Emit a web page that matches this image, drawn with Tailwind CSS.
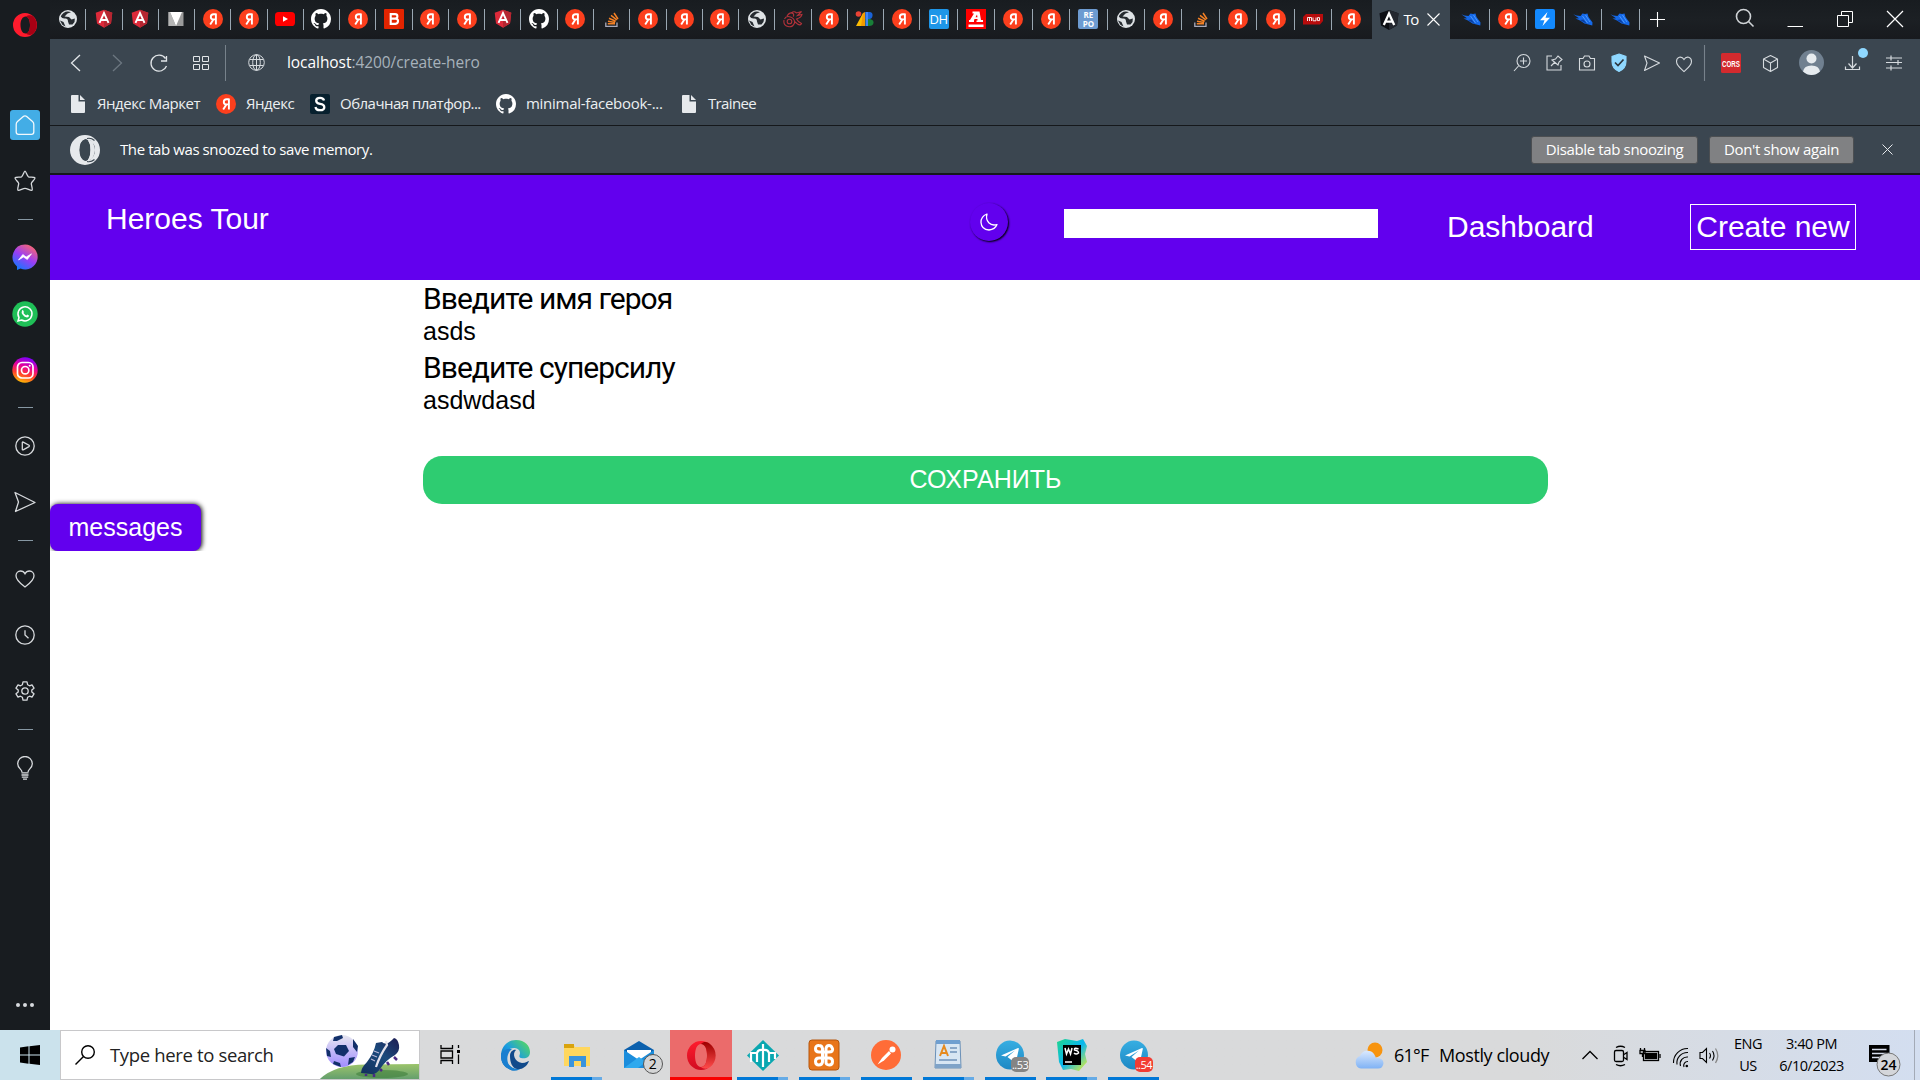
<!DOCTYPE html>
<html lang="en">
<head>
<meta charset="utf-8">
<title>Tour</title>
<script src="https://cdn.jsdelivr.net/npm/@tailwindcss/browser@4"></script>
</head>
<body class="w-[1920px] h-[1080px] overflow-hidden flex flex-col bg-white font-['Open_Sans','Noto_Sans',sans-serif]">
<svg class="absolute size-0">
  <defs>
    <linearGradient id="gMsg" x1="0.2" y1="1" x2="0.8" y2="0"><stop offset="0" stop-color="#0a7cff"/><stop offset=".5" stop-color="#9b3df5"/><stop offset="1" stop-color="#ff6a68"/></linearGradient>
    <linearGradient id="gInst" x1="0.3" y1="1" x2="0.6" y2="0"><stop offset="0" stop-color="#ffc400"/><stop offset=".35" stop-color="#ff3d2e"/><stop offset=".65" stop-color="#e6009e"/><stop offset="1" stop-color="#7a00ff"/></linearGradient>
    <linearGradient id="gOp" x1="0" y1="0" x2="0" y2="1"><stop offset="0" stop-color="#ff1b2d"/><stop offset="1" stop-color="#d00c20"/></linearGradient>
    <linearGradient id="gOp2" x1="0" y1="0" x2="0" y2="1"><stop offset="0" stop-color="#9c0000"/><stop offset="1" stop-color="#ff4b4b"/></linearGradient>
    <linearGradient id="gEdge" x1="0" y1="1" x2="1" y2="0"><stop offset="0" stop-color="#0c59a4"/><stop offset=".5" stop-color="#1b9de2"/><stop offset="1" stop-color="#5fe04d"/></linearGradient>
    <linearGradient id="gCloud" x1="0" y1="0" x2="0" y2="1"><stop offset="0" stop-color="#dbe9fd"/><stop offset="1" stop-color="#7fb2f5"/></linearGradient>
    <linearGradient id="gTg" x1="0" y1="0" x2="0" y2="1"><stop offset="0" stop-color="#37aee2"/><stop offset="1" stop-color="#1e88c4"/></linearGradient>
    <linearGradient id="gBoot" x1="0" y1="1" x2="1" y2="0"><stop offset="0" stop-color="#12305c"/><stop offset=".55" stop-color="#1b4a7c"/><stop offset="1" stop-color="#1d1b52"/></linearGradient>
    <linearGradient id="gGrass" x1="0" y1="0" x2="0" y2="1"><stop offset="0" stop-color="#9cc46b"/><stop offset="1" stop-color="#5d9a6e"/></linearGradient>
    <linearGradient id="gBall" x1="0" y1="0" x2="0" y2="1"><stop offset="0" stop-color="#e8e8f0"/><stop offset="1" stop-color="#a08cff"/></linearGradient>
    <linearGradient id="gWs" x1="0" y1="0" x2="1" y2="1"><stop offset="0" stop-color="#1fd68b"/><stop offset=".5" stop-color="#08b6f0"/><stop offset="1" stop-color="#f2f32b"/></linearGradient>
  </defs>
  <symbol id="ya" viewBox="0 0 20 20"><circle cx="10" cy="10" r="10" fill="#fc3f1d"/><path d="M12.900 4.600V15.600M12.900 5.300H10.600C8.900 5.300 7.800 6.300 7.800 7.900C7.800 9.400 8.800 10.400 10.500 10.400H12.900M10.400 10.400L7.200 15.500" fill="none" stroke="#fff" stroke-width="1.900"/></symbol>
  <symbol id="earth" viewBox="0 0 20 20"><circle cx="10" cy="10" r="9" fill="#dfe3e6"/><path d="M2.800 7.500Q4 9.800 7 9.500T10 12.500L11 15.500H14.500Q17.500 12.500 16.800 9.500L13.500 10.500L11 8L6.500 7.500L9.500 4.500L13 3.300Q9 1.500 5.500 4Q3 6 2.800 7.500Z" fill="#262b30"/><path d="M2 11.500L5.500 13L7.500 17.500L4.500 16Z" fill="#262b30"/><path d="M10.500 6L15.500 5.500L13.500 8Z" fill="#dfe3e6"/></symbol>
  <symbol id="ng" viewBox="0 0 20 20"><path d="M10 .8L18.300 3.700L17 14.600L10 18.800L3 14.600L1.700 3.700Z" fill="#dd2a3a"/><path d="M10 .8L18.300 3.700L17 14.600L10 18.800Z" fill="#b52631"/><path d="M5.500 13.800L10 4L14.500 13.800M7.400 11H12.600" fill="none" stroke="#fff" stroke-width="1.900"/></symbol>
  <symbol id="ngk" viewBox="0 0 20 20"><path d="M10 0L19.500 3.300L18 15.500L10 20L2 15.500L.5 3.300Z" fill="#0d0f14"/><path d="M10 0L19.500 3.300L18 15.500L10 20Z" fill="#23272f"/><path d="M4.800 15L10 3.500L15.200 15M7 11.700H13" fill="none" stroke="#fff" stroke-width="2.300"/></symbol>
  <symbol id="vv" viewBox="0 0 20 20"><path d="M2.500 3H17.500V17H2.500Z" fill="#9b9b9b"/><path d="M4 3H16L10 17Z" fill="#fff"/><path d="M2.500 3H4L10 17H2.500Z" fill="#b5b5b5"/></symbol>
  <symbol id="yt" viewBox="0 0 20 20"><rect y="3" width="20" height="14" rx="3.600" fill="#f00"/><path d="M8 7.200V12.800L13 10Z" fill="#fff"/></symbol>
  <symbol id="gh" viewBox="0 0 16 16"><path fill="#fff" d="M8 0C3.580 0 0 3.580 0 8c0 3.540 2.290 6.530 5.470 7.590.4.070.55-.17.55-.38 0-.19-.01-.82-.01-1.490-2.010.37-2.530-.49-2.690-.94-.09-.23-.48-.94-.82-1.130-.28-.15-.68-.52-.01-.53.63-.01 1.080.58 1.230.82.72 1.210 1.870.87 2.330.66.07-.52.28-.87.51-1.070-1.780-.2-3.640-.89-3.640-3.950 0-.87.31-1.590.82-2.150-.08-.2-.36-1.020.08-2.120 0 0 .67-.21 2.200.82.64-.18 1.320-.27 2-.27s1.360.09 2 .27c1.530-1.040 2.200-.82 2.200-.82.44 1.100.16 1.920.08 2.120.51.56.82 1.270.82 2.150 0 3.070-1.870 3.750-3.650 3.950.29.25.54.73.54 1.480 0 1.070-.01 1.930-.01 2.200 0 .21.15.46.55.38A8.010 8.010 0 0 0 16 8c0-4.420-3.580-8-8-8z"/></symbol>
  <symbol id="bb" viewBox="0 0 20 20"><rect width="20" height="20" rx="1" fill="#e32400"/><path d="M6.700 5.100H11Q13.400 5.100 13.400 7.300T11 9.600H6.700ZM6.700 9.600H11.500Q14 9.600 14 12.100T11.400 14.900H6.700Z" fill="none" stroke="#fff" stroke-width="2.100"/></symbol>
  <symbol id="so" viewBox="0 0 20 20"><path d="M3.800 13.500V17.300H15V13.500" fill="none" stroke="#aab" stroke-width="1.300"/><path d="M5.800 14.800H13M6 12.200L13.100 13.600M7 9.300L13.700 12.200M9 6.300L14.800 10.800M12 4L16 10" stroke="#f48024" stroke-width="1.500"/></symbol>
  <symbol id="ok" viewBox="0 0 20 20"><g fill="none" stroke="#b3323a" stroke-width="1.100"><circle cx="6.500" cy="12.500" r="2.300"/><path d="M1.500 10Q3 6.500 7.500 8Q12 9.500 11.500 14Q10 18 6 17.800Q0 17 1 11M4 7Q7 2.500 10 4.500Q11.500 6 10 7.500M8.500 4Q11 1.500 13.500 4L18.500 2.500L14.500 6.500L19 5.500Q18.500 8.500 13.500 10Q15 13 18.500 14.500Q17.500 17 14.500 15L11.500 12.500"/></g></symbol>
  <symbol id="cb" viewBox="0 0 20 20"><circle cx="3.500" cy="5" r="2.800" fill="#ea4335"/><path d="M1 17L8 4V17Z" fill="#fbbc04"/><path d="M8 4L6 17H10V3Z" fill="#f29900"/><path d="M10.500 3H15Q18 3.500 17.500 7T13.500 10H10.500Z" fill="#1a63d8"/><path d="M10.500 10H15Q19 11 18.500 14T14 17H10.500Z" fill="#188038"/><path d="M10.500 3H13V17H10.500Z" fill="#4285f4"/></symbol>
  <symbol id="bird" viewBox="0 0 20 20"><path d="M.3 5.200L3.500 6.500L7.500 7L9.500 4.500L12 5L14.500 4.500L15.500 8L19.500 13.500L19.300 16.500L15.500 15.500L11.500 14.500L7 11.500L2.500 9.500L6 9.200Z" fill="#1468e8"/><path d="M9.500 7L14.500 14M12.500 6L17 13" stroke="#5aa4ff" stroke-width=".8"/><path d="M7 11L10.500 10.500L14 15Z" fill="#0a3fa0"/></symbol>
  <symbol id="bolt" viewBox="0 0 20 20"><rect width="20" height="20" rx="2" fill="#1389fd"/><path d="M12.500 3L5 11.200H9.500L7.500 17L15 8.800H10.500Z" fill="#fff"/></symbol>
  <symbol id="amp" viewBox="0 0 20 20"><rect width="20" height="20" fill="#f00"/><path d="M3 13V11H4L8 4.500H6.500V2.500H13.500L15 11H17V13H10.500V11.500H11.500V10H8.500L8 11.500V13ZM9.500 8.300H11.500L11 5.500Z" fill="#fff"/><path d="M2.500 15.500H17.500V18H2.500Z" fill="#fff"/></symbol>
  <symbol id="mud" viewBox="0 0 20 20"><path d="M3 5H20V12L17 15.500H0V8Z" fill="#b80c0c"/><path d="M4.500 12V8.500H8.500V12M6.500 8.500V12M10 8.500V11.800H13V8.500M14.500 8.600H16.500V11.600H14.500Z" fill="none" stroke="#fff" stroke-width=".9"/></symbol>
  <symbol id="doc" viewBox="0 0 14 18"><path d="M0 1Q0 0 1 0H7.500V6.500H14V17Q14 18 13 18H1Q0 18 0 17Z" fill="#e6e9ec"/><path d="M9 0L14 5H9Z" fill="#e6e9ec"/></symbol>
  <symbol id="send" viewBox="0 0 22 22"><path d="M1 1.500L21 11.500L1.500 20.500L4.500 11Z" fill="none" stroke="currentColor" stroke-width="1.300" stroke-linejoin="round"/></symbol>
  <symbol id="heart" viewBox="0 0 20 20"><path d="M10 18C6 15 1 11.500 1 6.800C1 4 3 2 5.500 2C7.500 2 9.200 3.200 10 4.800C10.800 3.200 12.500 2 14.500 2C17 2 19 4 19 6.800C19 11.500 14 15 10 18Z" fill="none" stroke="currentColor" stroke-width="1.300"/></symbol>
  <symbol id="tg" viewBox="0 0 30 38"><ellipse cx="15" cy="19" rx="14" ry="14.500" fill="url(#gTg)"/><path d="M6 19.500L23 12Q24 11.800 23.800 13L21 26Q20.500 27 19.500 26.500L12.500 21L20 14.500L10.500 20.500Z" fill="#fff"/></symbol>
</svg>

<div class="flex h-[1030px]">
  <!-- Sidebar -->
  <aside class="w-[50px] h-[1030px] shrink-0 bg-[#181c20] flex flex-col items-center text-[#d7dadd]">
    <div class="h-[97px] pt-[13px]">
      <svg class="size-6" viewBox="0 0 24 24"><path fill-rule="evenodd" d="M12 0A12 12 0 1 0 12 24A12 12 0 1 0 12 0ZM12.500 3.500C15.300 3.500 17 7 17 12S15.300 20.500 12.500 20.500S7.500 17 7.500 12S9.700 3.500 12.500 3.500Z" fill="#ff1b2d"/><path d="M12.500 3.500C16 1.500 18.500 2.200 20 3.200A12 12 0 0 1 20 20.800C17.500 22.500 15 22.300 12.500 20.500C15.300 20.500 17 17 17 12S15.300 3.500 12.500 3.500Z" fill="#a70014"/></svg>
    </div>
    <div class="h-14 flex items-center"><div class="size-[30px] rounded-[3px] bg-[#43ade6] flex items-center justify-center"><svg class="size-5" viewBox="0 0 20 20"><path d="M10 .9Q11 .9 12 1.800L17.500 6.600Q18.800 7.800 18.800 9.500V17Q18.800 19.300 16.500 19.300H3.500Q1.200 19.300 1.200 17V9.500Q1.200 7.800 2.500 6.600L8 1.800Q9 .9 10 .9Z" fill="none" stroke="#f2f8fc" stroke-width="1.300"/></svg></div></div>
    <div class="h-14 flex items-center"><svg class="size-[22px] mr-px" viewBox="0 0 22 22"><path d="M11 1.200C12 1.200 13 6.200 14.500 6.900C16 7.500 20.500 6.500 21 8C21.300 9.200 17.500 12 17.300 13.500C17.200 15 19 19.500 18 20.300C16.800 21 13 18.300 11 18.300S5.200 21 4 20.300C3 19.500 4.800 15 4.700 13.500C4.500 12 .7 9.200 1 8C1.500 6.500 6 7.500 7.500 6.900C9 6.200 10 1.200 11 1.200Z" fill="none" stroke="currentColor" stroke-width="1.300"/></svg></div>
    <div class="h-5 flex items-center"><div class="w-[15px] h-px bg-[#8697a3]"></div></div>
    <div class="h-14 flex items-center"><svg class="size-[26px]" viewBox="0 0 26 26"><path d="M13 0.500A12.500 12.500 0 1 1 8.500 24.600L5 26V22.500A12.500 12.500 0 0 1 13 .5Z" fill="url(#gMsg)"/><path d="M6.500 16L10.800 10.500L14.200 13L19.500 9.800L15.300 15.500L11.500 13Z" fill="#fff" stroke="#fff" stroke-width=".7" stroke-linejoin="round"/></svg></div>
    <div class="h-[57px] flex items-center"><svg class="size-[26px]" viewBox="0 0 26 26"><circle cx="13" cy="13" r="12.700" fill="#1fbf57"/><path d="M6 20L7 16.500A7 7 0 1 1 9.600 19Z" fill="none" stroke="#fff" stroke-width="1.500"/><path d="M10 9.500Q10.800 8.700 11.300 9.600L11.900 11Q11.300 11.800 11.800 12.500Q12.800 13.800 14.200 14.400L15.200 13.600L17 14.500Q17 16.300 15 16.500Q12.500 16.300 10.700 13.800Q9 11.500 10 9.500Z" fill="#fff"/></svg></div>
    <div class="h-14 flex items-center"><svg class="size-[26px]" viewBox="0 0 26 26"><circle cx="13" cy="13" r="12.700" fill="url(#gInst)"/><g fill="none" stroke="#fff" stroke-width="1.700"><rect x="5.500" y="5.500" width="15.500" height="15.500" rx="4.500"/><circle cx="13.200" cy="13.200" r="3.700"/></g><circle cx="17.700" cy="8.800" r="1" fill="#fff"/></svg></div>
    <div class="h-[19px] flex items-center"><div class="w-[15px] h-px bg-[#8697a3]"></div></div>
    <div class="h-[57px] flex items-center"><svg class="size-5 mr-px" viewBox="0 0 20 20"><g fill="none" stroke="currentColor" stroke-width="1.300"><circle cx="10" cy="10" r="9.200"/><path d="M7.300 6.600Q7.300 5.700 8.200 6.100L14 9.300Q14.800 10 14 10.600L8.200 13.800Q7.300 14.200 7.300 13.300Z"/></g></svg></div>
    <div class="h-14 flex items-center"><svg class="size-[22px]"><use href="#send"/></svg></div>
    <div class="h-[21px] flex items-center"><div class="w-[15px] h-px bg-[#8697a3]"></div></div>
    <div class="h-14 flex items-center"><svg class="size-5 mr-px"><use href="#heart"/></svg></div>
    <div class="h-14 flex items-center"><svg class="size-5 mr-px" viewBox="0 0 20 20"><g fill="none" stroke="currentColor" stroke-width="1.300"><circle cx="10" cy="10" r="9.200"/><path d="M10 5.300V10L13.500 13.300"/></g></svg></div>
    <div class="h-14 flex items-center"><svg class="size-5 mr-px" viewBox="0 0 20 20"><g fill="none" stroke="currentColor" stroke-width="1.300" stroke-linejoin="round"><circle cx="10" cy="10" r="3.200"/><path d="M8 .8H12L12.600 3.700L14.600 4.800L17 3.800L19 7.200L16.800 9V11L19 12.800L17 16.200L14.600 15.200L12.600 16.300L12 19.200H8L7.400 16.300L5.400 15.200L3 16.200L1 12.800L3.200 11V9L1 7.200L3 3.800L5.400 4.800L7.400 3.700Z"/></g></svg></div>
    <div class="h-[21px] flex items-center"><div class="w-[15px] h-px bg-[#8697a3]"></div></div>
    <div class="h-14 flex items-center"><svg class="w-4 h-6" viewBox="0 0 16 24"><g fill="none" stroke="currentColor" stroke-width="1.300"><path d="M5 16.200C5 13 .7 12.500 .7 7.800A7.300 7.300 0 0 1 15.300 7.800C15.300 12.500 11 13 11 16.200"/><path d="M4.500 16.800H11.500M4.500 19H11.500M4.800 21.200H11.200M6 23.200H10"/></g></svg></div>
    <div class="mt-auto h-[50px] flex items-center gap-[3px]"><i class="size-1 rounded-full bg-[#d7dadd]"></i><i class="size-1 rounded-full bg-[#d7dadd]"></i><i class="size-1 rounded-full bg-[#d7dadd]"></i></div>
  </aside>

  <main class="w-[1870px] flex flex-col">
    <!-- Tab strip -->
    <div class="h-[39px] shrink-0 flex bg-linear-to-b from-[#181c20] via-[#1c2024] to-[#181a1e]">
      <div id="tabsA" class="flex"></div>
      <div id="tabsB" class="flex w-[452px]"></div>
      <div class="w-[78px] bg-[#3b4650] flex items-center pl-[7px] text-white text-[15px]">
        <svg class="size-5 shrink-0"><use href="#ngk"/></svg>
        <span class="w-[16px] ml-[4px] overflow-hidden whitespace-nowrap tracking-[-1.5px]">To</span>
        <svg class="size-[13px] ml-2" viewBox="0 0 13 13"><path d="M.5 .5L12.500 12.500M12.500 .5L.5 12.500" stroke="#fff" stroke-width="1.100"/></svg>
      </div>
      <div id="tabsC" class="flex pl-[2px]"></div>
      <div class="flex items-center ml-2.5"><svg class="size-[15px]" viewBox="0 0 15 15"><path d="M7.500 0V15M0 7.500H15" stroke="#fff" stroke-width="1.100"/></svg></div>
      <div class="ml-auto flex items-center text-white">
        <svg class="w-[50px] h-[39px]" viewBox="0 0 50 39"><g fill="none" stroke="#cfd3d6" stroke-width="1.600"><circle cx="23.500" cy="16.500" r="7"/><path d="M28.500 21.500L33.500 26.500"/></g></svg>
        <svg class="w-[50px] h-[39px]" viewBox="0 0 50 39"><path d="M17.500 26.500H33" stroke="#fff"/></svg>
        <svg class="w-[50px] h-[39px]" viewBox="0 0 50 39"><g fill="none" stroke="#fff"><path d="M17.500 15.500H28.500V26.500H17.500ZM21.500 15.500V11.500H32.500V22.500H28.500"/></g></svg>
        <svg class="w-[50px] h-[39px]" viewBox="0 0 50 39"><path d="M17 11L33 27M33 11L17 27" stroke="#fff" stroke-width="1.200"/></svg>
      </div>
    </div>

    <!-- Address bar -->
    <div class="h-12 shrink-0 bg-[#3b4650] flex items-center text-[#e2e6e9]">
      <svg class="w-[175px] h-12" viewBox="0 0 175 48" fill="none" stroke="#e2e6e9" stroke-width="1.300"><path d="M30 16L21.500 24L30 32"/><path d="M63 16L71.500 24L63 32" stroke="#6c7780"/><path d="M115.500 19.500A8 8 0 1 0 116.500 27M116.500 17V22H111"/><path d="M143.500 17.500H149.500V22.500H143.500ZM152.500 17.500H158.500V22.500H152.500ZM143.500 25.500H149.500V30.500H143.500ZM152.500 25.500H158.500V30.500H152.500Z" stroke-width="1"/></svg>
      <div class="w-px h-9 bg-[#77828b]"></div>
      <svg class="size-[17px] ml-[22px] mb-0.5" viewBox="0 0 17 17"><g fill="none" stroke="#d5dade" stroke-width="1"><circle cx="8.500" cy="8.500" r="7.800"/><ellipse cx="8.500" cy="8.500" rx="3.800" ry="7.800"/><path d="M8.500 .7V16.300M1.500 5.500H15.500M1.500 11.500H15.500"/></g></svg>
      <div class="ml-[22px] text-[15.500px] whitespace-nowrap text-[#a7b2bb] tracking-[-0.06px]"><span class="text-white">localhost</span>:4200/create-hero</div>
      <div class="ml-auto flex items-center">
        <svg class="w-[335px] h-12 text-[#d5dade]" viewBox="1505 39 335 48" fill="none" stroke="#d5dade" stroke-width="1.100">
          <circle cx="1523.500" cy="61" r="6.500"/><path d="M1518.500 66L1514 71M1520 61H1527M1523.500 57.500V64.500"/>
          <path d="M1552 56H1547V70H1561V65M1551 66L1555 62M1552 60L1558 65L1559 62L1562 59.500L1558 56L1555.500 59Z"/>
          <path d="M1579.500 58.500H1583L1584.500 56H1589L1590.500 58.500H1594.500V70H1579.500Z"/><circle cx="1587" cy="64" r="3"/>
          <path d="M1619 55.500L1626 58V63Q1626 70 1619 73Q1612 70 1612 63V58Z" fill="#8fd8ff" stroke="#8fd8ff" transform="translate(0 -1.500)"/><path d="M1615 62.500L1618 65.500L1623.500 59.500" stroke="#2d3740" stroke-width="1.700"/>
          <path d="M1644.500 57L1659.500 64L1644.500 71.500L1647 64Z" stroke-linejoin="round" transform="translate(0 -1)"/>
          <path d="M1684 71.500C1680 68 1676.500 65.500 1676.500 61.500C1676.500 57 1681.500 55.500 1684 59.500C1686.500 55.500 1691.500 57 1691.500 61.500C1691.500 65.500 1688 68 1684 71.500Z"/>
          <path d="M1704.500 45V81" stroke="#77828b"/>
          <rect x="1721" y="53" width="20" height="20" rx="1.500" fill="#d32a2e" stroke="none"/>
          <text x="1731" y="66.500" text-anchor="middle" textLength="18" lengthAdjust="spacingAndGlyphs" font-family="Liberation Sans" font-size="9.500" font-weight="700" fill="#fff" stroke="none">CORS</text>
          <path d="M1770.500 55.500L1777.500 59V67.500L1770.500 71.500L1763.500 67.500V59ZM1763.500 59L1770.500 63L1777.500 59M1770.500 63V71.500" stroke-linejoin="round"/>
          <circle cx="1811.500" cy="62.500" r="12.500" fill="#708090" stroke="none"/><circle cx="1811.500" cy="58.500" r="5" fill="#e6ebef" stroke="none"/><path d="M1803 71.500Q1804 65.500 1811.500 65.500T1820 71.500Q1816 75 1811.500 75T1803 71.500Z" fill="#e6ebef" stroke="none"/>
        </svg>
        <svg class="w-[80px] h-12" viewBox="1840 39 80 48" fill="none" stroke="#d5dade" stroke-width="1.200">
          <path d="M1852.500 56V68M1848.500 63.500L1852.500 68L1856.500 63.500M1845.500 66.500V69.500H1859.500V66.500"/><circle cx="1863" cy="53" r="5" fill="#8fd8ff" stroke="none"/>
          <path d="M1886 58H1902M1886 62.500H1902M1886 68H1902M1891 55.500V60.500M1898 60V65M1891 65.500V70.500"/>
        </svg>
      </div>
    </div>

    <!-- Bookmarks -->
    <div class="h-[39px] shrink-0 bg-[#3b4650] border-b border-[#15181b] pb-1 flex items-center text-[#eceff1] text-[15px] whitespace-nowrap">
      <svg class="w-3.5 h-[18px] ml-[21px]"><use href="#doc"/></svg><span class="w-[107px] ml-3 mb-0.5 tracking-[-0.46px]">Яндекс Маркет</span>
      <svg class="size-5 ml-3"><use href="#ya"/></svg><span class="w-[52px] ml-2.5 mb-0.5 tracking-[-0.46px]">Яндекс</span>
      <svg class="size-5 ml-3" viewBox="0 0 20 20"><rect width="20" height="20" rx="2" fill="#07202e"/><path d="M14 6.500Q13.500 3.800 10 3.800Q6.200 3.800 6.200 6.700Q6.200 9.200 10 9.800Q14.300 10.400 14.300 13.200Q14.300 16.200 10 16.200Q6 16.200 5.500 13" fill="none" stroke="#fff" stroke-width="2.300"/></svg><span class="w-[144px] ml-2.5 mb-0.5 tracking-[-0.52px]">Облачная платфор...</span>
      <svg class="size-5 ml-3"><use href="#gh"/></svg><span class="w-[140px] ml-2.5 mb-0.5 tracking-[-0.28px]">minimal-facebook-...</span>
      <svg class="w-3.5 h-[18px] ml-[16px]"><use href="#doc"/></svg><span class="ml-3 mb-0.5 tracking-[-0.65px]">Trainee</span>
    </div>

    <!-- Snooze notice -->
    <div class="h-[49px] shrink-0 bg-[#3b4650] border-b-2 border-[#15181b] flex items-center text-white text-[15px] whitespace-nowrap">
      <svg class="size-[30px] ml-5" viewBox="0 0 30 30"><path fill-rule="evenodd" d="M15 0A15 15 0 1 0 15 30A15 15 0 1 0 15 0ZM17 4.500C21.500 4.500 24.500 9 24.500 15S21.500 25.500 17 25.500Q20 22 20 15T17 4.500Q12.500 4 10.500 9Q9 15 10.500 21Q12.500 26 17 25.500L20 25Q25 21 25 15T20 5L17 4.500Z" fill="#e6e9ec"/><path d="M15.500 4Q20.500 5.500 20.500 15T15.500 26Q9.500 24 9.500 15T15.500 4Z" fill="#3b4650"/><path d="M17 3.500Q21 2.500 24.500 5.500M17 26.500Q21 27.500 24.500 24.500" fill="none" stroke="#3b4650" stroke-width="1.200"/><path d="M18 5Q23.500 6 25 15Q23.500 24 18 25Q20.500 21 20.500 15T18 5Z" fill="#e6e9ec"/></svg>
      <span class="ml-5 tracking-[-0.41px]">The tab was snoozed to save memory.</span>
      <span class="ml-auto w-[167px] h-7 rounded-[3px] border border-[#4c4f52] bg-[#808183] flex items-center justify-center tracking-[-0.36px]">Disable tab snoozing</span>
      <span class="ml-[11px] w-[145px] h-7 rounded-[3px] border border-[#4c4f52] bg-[#808183] flex items-center justify-center tracking-[-0.32px]">Don't show again</span>
      <svg class="size-[11px] ml-7 mr-[27px]" viewBox="0 0 11 11"><path d="M.5 .5L10.500 10.500M10.500 .5L.5 10.500" stroke="#e6e9ec"/></svg>
    </div>

    <!-- App -->
    <header class="h-[105px] shrink-0 bg-[#6200ee] text-white flex font-['Liberation_Sans',Arial,sans-serif] text-[30px] leading-[34px]">
      <span class="ml-14 mt-[27px] w-[200px]">Heroes Tour</span>
      <div class="ml-[664px] mt-[28px] size-[38px] rounded-full bg-[#6200ee] shadow-[1px_1px_2px_#000] flex items-center justify-center">
        <svg class="size-[18px]" viewBox="0 0 18 18"><path d="M7 1Q.8 3.500 1 9.500Q1.500 16.500 9 17Q15 16.500 17 11.500Q12 13 8.800 9.800Q5.500 6 7 1Z" fill="none" stroke="#fff" stroke-width="1.300" stroke-linejoin="round"/></svg>
      </div>
      <div class="ml-14 mt-[34px] w-[314px] h-[29px] bg-white"></div>
      <span class="ml-[69px] mt-[35px] w-[148px]">Dashboard</span>
      <span class="ml-[95px] mt-[29px] w-[166px] h-[46px] border border-white flex items-center justify-center whitespace-nowrap">Create new</span>
    </header>
    <section class="flex-1 bg-white text-black font-['Liberation_Sans',Arial,sans-serif] text-[25px] leading-[26px]">
      <div class="ml-[373px] w-[1125px] flex flex-col">
        <label class="h-[38px] font-[Roboto,sans-serif] text-[30px] leading-[38px] tracking-[-0.98px]">Введите имя героя</label>
        <div class="h-[31px]">asds</div>
        <label class="h-[38px] font-[Roboto,sans-serif] text-[30px] leading-[38px] tracking-[-0.98px]">Введите суперсилу</label>
        <div class="h-[31px]">asdwdasd</div>
        <button class="mt-[38px] h-12 pb-0.5 rounded-[19px] bg-[#2ecc71] text-white">СОХРАНИТЬ</button>
      </div>
      <div class="w-[160px] h-[57px] -mt-2.5 pt-2.5 overflow-hidden">
        <div class="w-[151px] h-[47px] rounded-lg bg-[#6200ee] text-white text-center leading-[46px] shadow-[1px_0_5px_#000]">messages</div>
      </div>
    </section>
  </main>
</div>

<!-- Taskbar -->
<footer class="h-[50px] bg-linear-to-r from-[#d9dadb] via-[#d9dadb] via-80% to-[#d3def0] flex items-stretch text-black">
  <div class="w-[60px] bg-[#cbe2ec] flex items-center justify-center"><svg class="size-5" viewBox="0 0 20 20"><path d="M0 2.500L8.500 1.300V9.500H0ZM9.500 1.200L20 0V9.500H9.500ZM0 10.500H8.500V18.700L0 17.500ZM9.500 10.500H20V20L9.500 18.800Z"/></svg></div>
  <div class="w-[360px] border border-[#c8c8ca] bg-white flex items-center overflow-hidden">
    <svg class="size-5 ml-3.5" viewBox="0 0 20 20"><g fill="none" stroke="#000" stroke-width="1.400"><circle cx="13" cy="7" r="6.300"/><path d="M8.500 11.500L.5 19.500"/></g></svg>
    <span class="ml-[15px] text-[18.500px] tracking-[-0.35px] text-[#222] whitespace-nowrap w-[170px]">Type here to search</span>
    <svg class="w-[105px] h-12 ml-auto" viewBox="0 0 105 48">
      <path d="M4 50Q18 34 52 33.500L105 33V50Z" fill="url(#gGrass)"/><ellipse cx="68" cy="43" rx="26" ry="4" fill="#3f7f3c" opacity=".6"/>
      <circle cx="28" cy="20" r="16" fill="url(#gBall)"/><g fill="#12306a"><path d="M24 14L32 14L35 20L30 25.500L22 23L20 18Z"/><path d="M20 6L28 4L29 7L23 10L19 10ZM39 8L44 15L43 21L39 16ZM12 17L16 20L17 26L13 25ZM20 30L26 32L27 36L19 33ZM35 27L41 26L39 31L34 34Z"/></g>
      <path d="M47 42Q47 37 53 31Q60 22 62 12L68 11Q72 15 78 9L80 7Q84 8 85 14Q86 20 81 24Q72 29 66 38Q62 44 57 43Z" fill="url(#gBoot)"/><path d="M72 10L73 14Q66 24 62 36" fill="none" stroke="#e4e2ec" stroke-width="2.200"/><path d="M58 24L63 26M57 28L61 30M60 20L65 22" stroke="#b9b7d6" stroke-width="1.200"/><path d="M60 43V46M66 38L68 40M73 31L75 34M80 26L83 29M52 43V45" stroke="#4b2a86" stroke-width="2.500"/>
    </svg>
  </div>
  <div class="w-[64px] pl-5 pt-[15px]"><svg class="size-5" viewBox="0 0 20 20"><g fill="none" stroke="#000" stroke-width="1.300"><path d="M1 0V3.500H12.500V0M1 19V15.500H12.500V19M1 6H12.500V13H1ZM18.500 0V3M18.500 9.500V19"/></g><rect x="17" y="5" width="3" height="3"/></svg></div>
  <div id="apps" class="flex"></div>
  <div class="ml-auto flex items-center">
    <svg class="w-[30px] h-7 mb-[-2px]" viewBox="0 0 30 28"><circle cx="21" cy="8" r="7.500" fill="#f7940f"/><path d="M7 26.500A6.500 6.500 0 0 1 6 14A8 8 0 0 1 20 12Q22 15 21.500 16Q29 15.500 29.500 21Q29 26.500 24 26.500Z" fill="url(#gCloud)"/></svg>
    <span class="ml-2.5 w-[45px] text-[18px] tracking-[-0.8px]">61°F</span><span class="w-[143px] text-[18px] tracking-[-0.4px] whitespace-nowrap">Mostly cloudy</span>
    <svg class="w-[140px] h-[50px]" viewBox="1582 1030 140 50" fill="none" stroke="#000" stroke-width="1.300">
      <path d="M1582.500 1059L1590 1051.500L1597.500 1059"/>
      <rect x="1614.500" y="1050.500" width="9" height="11" rx="1.500"/><path d="M1624 1054.500L1627 1052.500V1059.500L1624 1057.500M1616 1047.500Q1620.500 1045 1625 1047.500M1616 1064.500Q1620.500 1067 1625 1064.500"/>
      <rect x="1643.500" y="1051.500" width="15" height="9"/><rect x="1645.500" y="1053.500" width="11" height="5" fill="#000"/><path d="M1660 1054V1058M1640.500 1048V1050M1644.500 1048V1050M1640 1050.500H1645V1053.500H1640ZM1642.500 1054V1057"/>
      <g stroke-width="1.100"><path d="M1673.500 1063A14 14 0 0 1 1688 1048.500M1677 1064.500A10.500 10.500 0 0 1 1688 1052.500M1680.500 1066A7 7 0 0 1 1688 1057M1684 1067A4 4 0 0 1 1688 1061.500"/></g><circle cx="1686.800" cy="1066" r="1.300" fill="#000" stroke="none"/>
      <path d="M1700 1052.500H1702.500L1706.500 1048.500V1062.500L1702.500 1058.500H1700ZM1709.500 1053Q1711.500 1055.500 1709.500 1058.500M1712.500 1051Q1715.500 1055.500 1712.500 1060.500" stroke-width="1.100"/><path d="M1715.500 1048.500Q1720 1055.500 1715.500 1063" stroke="#888"/>
    </svg>
    <div class="w-[52px] text-center text-[14.500px] leading-[22px] tracking-[-0.5px]">ENG<br>US</div>
    <div class="w-[75px] text-center text-[14.500px] leading-[22px] tracking-[-0.45px] whitespace-nowrap">3:40 PM<br>6/10/2023</div>
    <svg class="w-[65px] h-[50px] ml-[6px]" viewBox="1855 1030 65 50"><path d="M1869 1045H1889.500V1062H1881L1877 1066V1062H1869Z"/><path d="M1872 1049.500H1886.500M1872 1053.500H1886.500M1872 1057.500H1882" stroke="#d6dcea" stroke-width="1.500"/><circle cx="1888.500" cy="1064.500" r="11.500" fill="#d4d6da" stroke="#777"/><text x="1888.500" y="1069.500" text-anchor="middle" font-family="Open Sans" font-size="14" font-weight="600">24</text><path d="M1914.500 1030V1080" stroke="#a3aab6"/></svg>
  </div>
</footer>

<script>
const use = id => `<svg class="size-5"><use href="#${id}"/></svg>`;
const special = {
  dh: '<span class="size-5 rounded-[2px] bg-[#1e96e8] text-white text-[13px] leading-5 text-center tracking-[-0.5px] overflow-hidden">DH</span>',
  repo: '<span class="size-5 rounded-[2px] bg-[#6d9bd1] text-white text-[8px] font-bold leading-[9px] pt-px text-center">RE<br>PO</span>'
};
const icon = id => special[id] || use(id);
const fill = (el, ids, cls) => document.getElementById(el).innerHTML = ids.split(' ').map((id, i) =>
  `<div class="${cls}"><span class="flex-1 flex justify-center">${icon(id)}</span>${(el === 'tabsB' && i === 11) ? '' : '<i class="w-px h-[21px] bg-[#9aa7b2]"></i>'}</div>`).join('');
fill('tabsA', 'earth ng ng vv ya ya yt gh ya bb ya ya ng gh ya so ya ya ya earth ok ya cb ya', 'w-[36.27px] pb-px flex items-center');
fill('tabsB', 'dh amp ya ya repo earth ya so ya ya mud ya', 'w-[37.45px] pb-px flex items-center');
fill('tabsC', 'bird ya bolt bird bird', 'w-[37.45px] pb-px flex items-center');

const apps = [
 ['', '<path d="M1 20C1 10 8 4 16 4C25 4 30 10 30 16C30 22 25 23 21 22C18 21 20 19 20 17C20 13 16 12 14 12C7 12 4 18 6 24C8 30 14 34 20 33C16 35 12 35 9 33C4 31 1 26 1 20Z" fill="url(#gEdge)"/><path d="M1 20C1 15 7 12 12 13C7 17 6 24 9 29C12 33 16 34 20 33.500C16 35 12 35 9 33C4 31 1 26 1 20Z" fill="#1a7fd0"/><path d="M10 20C10 15 14 13 16 14C12 17 14 26 22 27C26 27 28 25 29 25C27 31 21 34 17 33C12 32 10 26 10 20Z" fill="#114a8b"/>'],
 ['split', '<path d="M2 8H11L13 11H28V30H2Z" fill="#ffd75e"/><path d="M2 8H12V12H2Z" fill="#d9a30d"/><path d="M7 20H24V31H19V25H12V31H7Z" fill="#3a94dd"/>'],
 ['', '<path d="M0 14L15 5L30 14V31H0Z" fill="#0b60ad"/><path d="M3 14H27V24H3Z" fill="#fff"/><path d="M0 14L15 24L30 14V32H0Z" fill="#1b8ddc"/><path d="M0 32L15 21L22 26L14 32Z" fill="#2fa9ee"/>'],
 ['opera', '<path fill-rule="evenodd" d="M15 5A14 14.500 0 1 0 15 34A14 14.500 0 1 0 15 5ZM15 8C19 8 21 13 21 19.500S19 31 15 31S9 26 9 19.500S11 8 15 8Z" fill="url(#gOp)"/><path d="M15 8C18 5 22 6 24 8A14.500 14.500 0 0 1 24 31C21 33.500 17 33 15 31C19 31 21 26 21 19.500S19 8 15 8Z" fill="url(#gOp2)"/>'],
 ['split', '<path d="M15 4L31 19.500L15 35L-1 19.500Z" fill="#0aa7b0"/><path d="M3 26V17H9V26M15 8V31M21 26V17H27V23M9 17Q10 13 15 14Q20 13 21 17" fill="none" stroke="#fff" stroke-width="2.200"/>'],
 ['split', '<rect x="0" y="4" width="30" height="30" rx="3" fill="#e8751a" stroke="#b5560c"/><path d="M14.500 16H10Q6.500 16 6.500 12.700T10 9.500Q13 9.500 13.500 12.500V26Q13 29 9.800 29T6.500 25.500Q6.500 22 10 22H20Q23.500 22 23.500 25.500T20.200 29T17 26V12.500Q17.500 9.500 20 9.500T23.500 12.700T20 16H15" fill="none" stroke="#fff" stroke-width="3" stroke-linejoin="round"/>'],
 ['solid', '<circle cx="15" cy="19" r="15" fill="#ff6c37"/><path d="M6.500 28.500L11 22L18 15L20 17.500L13 24.500Z" fill="#fff"/><circle cx="21.500" cy="13.500" r="3" fill="#fff"/>'],
 ['split', '<path d="M3 5H27L28 32H2Z" fill="#d8e6f3" stroke="#6c91b7"/><path d="M3 4H27V8H3Z" fill="#6f9fd0"/><path d="M2 28H28V32H2Z" fill="#7fa3c8"/><path d="M7 20L11 10L15 20M8.500 17H13.500" fill="none" stroke="#e68a1e" stroke-width="2"/><path d="M17 12H24M17 16H24M6 24H24" stroke="#6f93bb" stroke-width="1.500"/>'],
 ['solid', '<use href="#tg" width="30" height="38"/>'],
 ['split', '<path d="M0 6L8 3L20 5L26 3L30 10L28 18L30 26L22 35L14 33L6 34L2 26Z" fill="url(#gWs)"/><path d="M6 9H24V29H6Z"/><path d="M8 12L9.500 18L11.500 13L13.500 18L15 12M21.500 13Q17 11 17.500 14Q22 15 21.500 17Q19 19 17 17M8 26H15" fill="none" stroke="#fff" stroke-width="1.500"/>'],
 ['solid', '<use href="#tg" width="30" height="38"/>']
];
const lines = {
  split: '<div class="w-[41px] h-[3px] bg-[#0078d7]"></div><div class="w-[10px] h-[3px] bg-[#66abe6]"></div>',
  solid: '<div class="w-[51px] h-[3px] bg-[#0078d7]"></div>',
  opera: '<div class="w-full h-[3px] bg-[#f90000]"></div>', '': ''
};
const badges = {
  2: '<span class="absolute left-[35px] top-[24px] size-[20px] rounded-full border border-[#555] bg-[#d4d5d6] text-[14px] leading-[18px] text-center">2</span>',
  8: '<span class="absolute left-[32px] top-[27px] w-[18px] h-[15px] rounded-[5px] bg-[#848484] text-white text-[11px] leading-[15px] text-center tracking-[-0.5px]">..53</span>',
  10: '<span class="absolute left-[32px] top-[27px] w-[18px] h-[15px] rounded-[5px] bg-[#f23c34] text-white text-[11px] leading-[15px] text-center tracking-[-0.5px]">..54</span>'
};
document.getElementById('apps').innerHTML = apps.map(([k, svg], i) =>
  `<div class="relative w-[61.9px] h-[50px] flex flex-col items-center ${k === 'opera' ? 'bg-[#eb6b6b]' : ''}"><svg class="w-[30px] h-[38px] mt-[6px] mb-[3px] overflow-visible" viewBox="0 0 30 38">${svg}</svg><div class="flex justify-center w-full">${lines[k]}</div>${badges[i] || ''}</div>`).join('');
</script>
</body>
</html>
